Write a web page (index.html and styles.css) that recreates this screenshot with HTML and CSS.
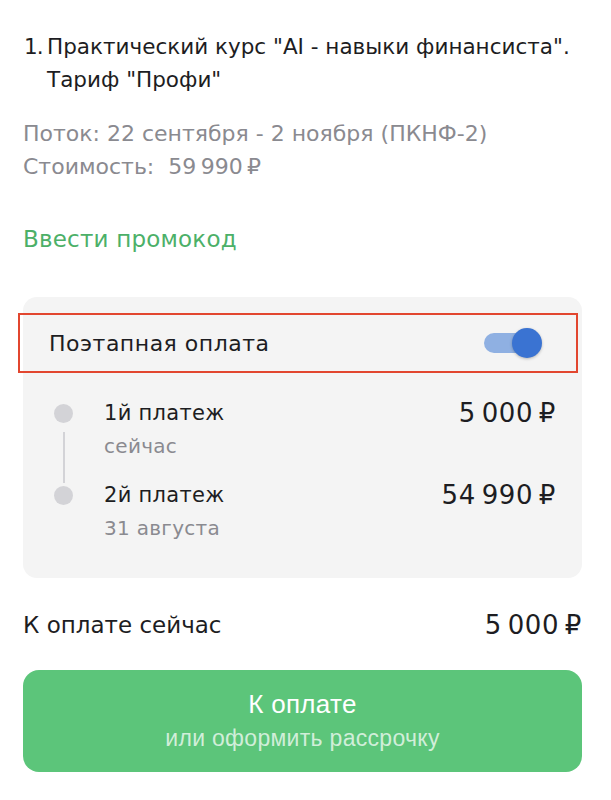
FILE: index.html
```html
<!DOCTYPE html>
<html lang="ru">
    <head>
        <meta charset="UTF-8" />
        <meta name="viewport" content="width=device-width, initial-scale=1.0" />
        <title>Оплата</title>
        <link rel="stylesheet" href="styles.css">
    </head>
    <body>
        <div class="order">
            <!-- Course -->
            <div class="course">
                <span class="course-num">1.</span>
                <span class="course-name">Практический курс "AI - навыки финансиста". Тариф "Профи"</span>
            </div>
            <div class="details">
                <p>Поток: 22 сентября - 2 ноября (ПКНФ-2)</p>
                <p>Стоимость:&nbsp; 59&#8201;990&#8201;₽</p>
            </div>
            <a class="promo" href="#">Ввести промокод</a>

            <!-- Installments -->
            <div class="plan">
                <div class="plan-head">
                    <span>Поэтапная оплата</span>
                    <span class="toggle"><span class="knob"></span></span>
                </div>
                <div class="steps">
                    <div class="step">
                        <span class="dot"></span>
                        <div class="step-text">
                            <div class="step-title">1й платеж</div>
                            <div class="step-date">сейчас</div>
                        </div>
                        <div class="step-sum">5&#8201;000&#8201;₽</div>
                    </div>
                    <div class="step">
                        <span class="dot"></span>
                        <div class="step-text">
                            <div class="step-title">2й платеж</div>
                            <div class="step-date">31 августа</div>
                        </div>
                        <div class="step-sum">54&#8201;990&#8201;₽</div>
                    </div>
                </div>
            </div>

            <div class="total">
                <span>К оплате сейчас</span>
                <span class="total-sum">5&#8201;000&#8201;₽</span>
            </div>

            <button class="pay">
                <span class="pay-main">К оплате</span>
                <span class="pay-sub">или оформить рассрочку</span>
            </button>
        </div>
    </body>
</html>
```

FILE: styles.css
```css
body {
    margin: 0;
    background-color: #ffffff;
    font-family: "DejaVu Sans", "Noto Sans", sans-serif;
    color: #1d1d22;
}

.order {
    padding: 30px 29px 0 23px;
}

/* Course */
.course {
    display: flex;
    font-size: 21.5px;
    line-height: 33px;
    padding-left: 1px;
}

.course-num {
    width: 23px;
    flex-shrink: 0;
    letter-spacing: -1px;
}

.details {
    margin-top: 21px;
    color: #8a8a90;
    font-size: 22px;
    line-height: 33px;
}

.details p {
    margin: 0;
}

.promo {
    display: block;
    margin-top: 42px;
    color: #4cb068;
    font-size: 23px;
    letter-spacing: 0.2px;
    line-height: 28px;
    text-decoration: none;
}

/* Installment plan */
.plan {
    margin-top: 44px;
    background-color: #f4f4f4;
    border-radius: 14px;
    padding: 16px 0 33px;
}

.plan-head {
    display: flex;
    align-items: center;
    justify-content: space-between;
    margin-left: -5px;
    margin-right: 4px;
    height: 56px;
    border: 2px solid #e2462f;
    padding: 0 36px 0 29px;
    font-size: 22px;
    letter-spacing: 0.5px;
}

.toggle {
    position: relative;
    width: 56px;
    height: 20px;
    border-radius: 10px;
    background-color: #8fb0e2;
}

.knob {
    position: absolute;
    right: -2px;
    top: -5px;
    width: 30px;
    height: 30px;
    border-radius: 50%;
    background-color: #3a73d2;
    box-shadow: 0 1px 3px rgba(0, 0, 0, 0.25);
}

.steps {
    position: relative;
    padding: 24px 26px 0 31px;
}

.steps::before {
    content: "";
    position: absolute;
    left: 40px;
    top: 59px;
    height: 51px;
    width: 2px;
    background-color: #d3d3d7;
}

.step {
    display: flex;
    align-items: flex-start;
}

.step + .step {
    margin-top: 16px;
}

.dot {
    width: 19px;
    height: 19px;
    border-radius: 50%;
    background-color: #d3d3d7;
    margin-top: 7px;
    flex-shrink: 0;
}

.step-text {
    flex: 1;
    margin-left: 31px;
}

.step-title {
    font-size: 21px;
    letter-spacing: 0.3px;
    line-height: 33px;
}

.step-date {
    font-size: 20px;
    letter-spacing: 0.3px;
    line-height: 33px;
    color: #8a8a90;
}

.step-sum {
    font-size: 26px;
    letter-spacing: 0.6px;
    line-height: 33px;
}

/* Total */
.total {
    display: flex;
    justify-content: space-between;
    align-items: center;
    height: 33px;
    margin-top: 30px;
    font-size: 23px;
}

.total-sum {
    font-size: 26px;
    letter-spacing: 0.6px;
}

/* Pay button */
.pay {
    display: flex;
    flex-direction: column;
    align-items: center;
    justify-content: center;
    width: 100%;
    margin-top: 29px;
    height: 102px;
    border: none;
    border-radius: 16px;
    background-color: #5cc57a;
    color: #ffffff;
    font-family: "Liberation Sans", Arial, sans-serif;
    cursor: pointer;
}

.pay-main {
    font-size: 26px;
    letter-spacing: 0.3px;
    line-height: 34px;
}

.pay-sub {
    font-size: 23px;
    letter-spacing: 0.3px;
    line-height: 34px;
    color: rgba(255, 255, 255, 0.72);
}
```
